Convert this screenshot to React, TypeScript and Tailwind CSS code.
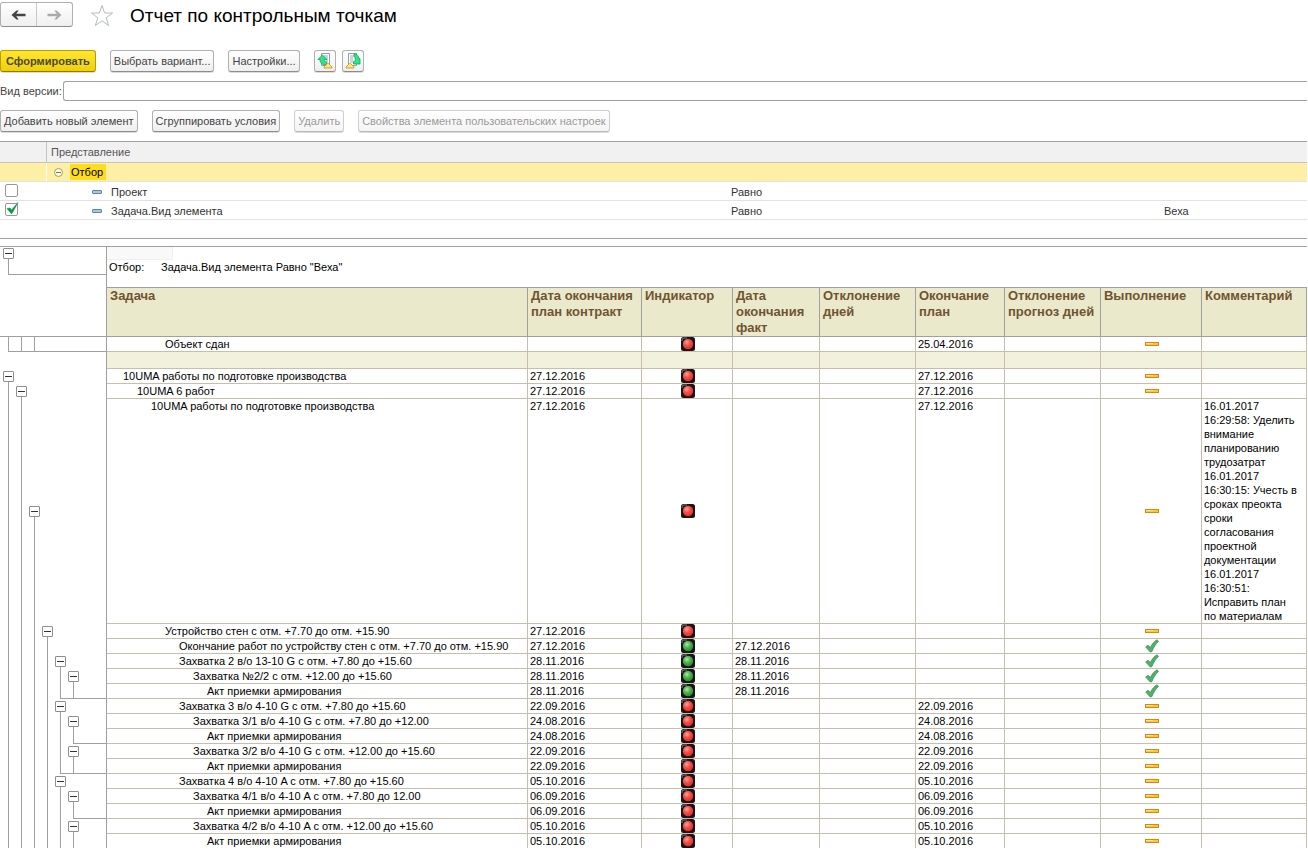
import { useState } from "react";
import type { ReactNode } from "react";

type Guide = "" | "box" | "line" | "corner";
type Status = "red" | "green";

interface ReportRow {
  task: string;
  level: number;
  guides: Guide[];
  status: Status;
  contract?: string;
  fact?: string;
  plan?: string;
  done?: boolean;
  comment?: string;
}

const headings = [
  "Задача",
  "Дата окончания план контракт",
  "Индикатор",
  "Дата окончания факт",
  "Отклонение дней",
  "Окончание план",
  "Отклонение прогноз дней",
  "Выполнение",
  "Комментарий"
];

const firstRow: ReportRow = {
  task: "Объект сдан",
  level: 4,
  guides: ["corner", "line", "line"],
  status: "red",
  plan: "25.04.2016"
};

const comment =
  "16.01.2017\n16:29:58: Уделить внимание планированию трудозатрат\n16.01.2017\n16:30:15: Учесть в сроках преокта сроки согласования проектной документации\n16.01.2017\n16:30:51:\nИсправить план по материалам";

const rows: ReportRow[] = [
  { task: "10UMA работы по подготовке производства", level: 1, guides: ["box"], status: "red", contract: "27.12.2016", plan: "27.12.2016" },
  { task: "10UMA 6 работ", level: 2, guides: ["line", "box"], status: "red", contract: "27.12.2016", plan: "27.12.2016" },
  { task: "10UMA работы по подготовке производства", level: 3, guides: ["line", "line", "box"], status: "red", contract: "27.12.2016", plan: "27.12.2016", comment },
  { task: "Устройство стен с отм. +7.70 до отм. +15.90", level: 4, guides: ["line", "line", "line", "box"], status: "red", contract: "27.12.2016" },
  { task: "Окончание работ по устройству стен с отм. +7.70 до отм. +15.90", level: 5, guides: ["line", "line", "line", "line"], status: "green", contract: "27.12.2016", fact: "27.12.2016", done: true },
  { task: "Захватка 2 в/о 13-10 G с отм. +7.80 до +15.60", level: 5, guides: ["line", "line", "line", "line", "box"], status: "green", contract: "28.11.2016", fact: "28.11.2016", done: true },
  { task: "Захватка №2/2 с отм. +12.00 до +15.60", level: 6, guides: ["line", "line", "line", "line", "line", "box"], status: "green", contract: "28.11.2016", fact: "28.11.2016", done: true },
  { task: "Акт приемки армирования", level: 7, guides: ["line", "line", "line", "line", "corner", "line"], status: "green", contract: "28.11.2016", fact: "28.11.2016", done: true },
  { task: "Захватка 3 в/о 4-10 G с отм. +7.80 до +15.60", level: 5, guides: ["line", "line", "line", "line", "box"], status: "red", contract: "22.09.2016", plan: "22.09.2016" },
  { task: "Захватка 3/1 в/о 4-10 G с отм. +7.80 до +12.00", level: 6, guides: ["line", "line", "line", "line", "line", "box"], status: "red", contract: "24.08.2016", plan: "24.08.2016" },
  { task: "Акт приемки армирования", level: 7, guides: ["line", "line", "line", "line", "line", "corner"], status: "red", contract: "24.08.2016", plan: "24.08.2016" },
  { task: "Захватка 3/2 в/о 4-10 G с отм. +12.00 до +15.60", level: 6, guides: ["line", "line", "line", "line", "line", "box"], status: "red", contract: "22.09.2016", plan: "22.09.2016" },
  { task: "Акт приемки армирования", level: 7, guides: ["line", "line", "line", "line", "corner", "line"], status: "red", contract: "22.09.2016", plan: "22.09.2016" },
  { task: "Захватка 4 в/о 4-10 A с отм. +7.80 до +15.60", level: 5, guides: ["line", "line", "line", "line", "box"], status: "red", contract: "05.10.2016", plan: "05.10.2016" },
  { task: "Захватка 4/1 в/о 4-10 A с отм. +7.80 до 12.00", level: 6, guides: ["line", "line", "line", "line", "line", "box"], status: "red", contract: "06.09.2016", plan: "06.09.2016" },
  { task: "Акт приемки армирования", level: 7, guides: ["line", "line", "line", "line", "line", "corner"], status: "red", contract: "06.09.2016", plan: "06.09.2016" },
  { task: "Захватка 4/2 в/о 4-10 A с отм. +12.00 до +15.60", level: 6, guides: ["line", "line", "line", "line", "line", "box"], status: "red", contract: "05.10.2016", plan: "05.10.2016" },
  { task: "Акт приемки армирования", level: 7, guides: ["line", "line", "line", "line", "line", "line"], status: "red", contract: "05.10.2016", plan: "05.10.2016" }
];

function ToolButton({
  children,
  disabled = false,
  label,
  primary = false
}: {
  children: ReactNode;
  disabled?: boolean;
  label?: string;
  primary?: boolean;
}) {
  const tone = primary
    ? "border-[#b59f00] border-b-[#8f7d00] bg-linear-to-b from-[#ffe62e] to-[#f0d000] font-bold text-[#4a4a32]"
    : disabled
      ? "border-[#cfcfcf] border-b-[#b8b8b8] bg-linear-to-b from-white to-[#f4f4f4] text-[#999]"
      : "border-[#b0b0b0] border-b-[#8c8c8c] bg-linear-to-b from-white to-[#efefef] text-[#444]";
  const padding = primary ? "px-[5px]" : label ? "px-[2px]" : "px-[3px]";

  return (
    <button
      aria-label={label}
      className={`flex h-[22px] items-center justify-center rounded-[3px] border whitespace-nowrap shadow-[0_1px_0_#dcdcdc] ${padding} ${tone}`}
      disabled={disabled}
      type="button"
    >
      {children}
    </button>
  );
}

function NavArrow({ back = false }: { back?: boolean }) {
  return (
    <svg className={back ? "h-3 w-[15px]" : "h-3 w-[15px] -scale-x-100"} viewBox="0 0 15 12">
      <path
        d="M.5 6 5.500 1.500h2.200L5.200 4.800H14.500v2.400H5.200l2.500 3.300H5.500z"
        fill={back ? "#444" : "#aaa"}
      />
    </svg>
  );
}

function StarIcon() {
  return (
    <svg className="h-[23px] w-6" viewBox="0 0 24 23">
      <path
        d="M12 1.5 14.6 9h8l-6.4 4.8 2.4 7.7-6.6-4.7-6.6 4.7 2.4-7.7L1.400 9h8z"
        fill="#fff"
        stroke="#b4b9c0"
      />
    </svg>
  );
}

function LoadSettingsIcon() {
  return (
    <svg className="h-4 w-4 shrink-0" viewBox="0 0 16 16">
      <path d="M4.500.5h8v12h-8z" fill="#fff" stroke="#8d9db3" />
      <path d="M7 3h4M8 5h3M9 7h2M9 9h2" stroke="#9aa9bd" />
      <path
        d="M5.500 2 .8 6.500H3c0 3.500 2 5.500 6.500 5.500V8.800C7.800 8.800 7.200 8 7.400 6.500H10z"
        fill="#2fe38a"
        stroke="#14a65a"
        strokeWidth=".8"
      />
      <path d="M10.500 10.500h1l3.500 3.500v1H7v-1z" fill="#ffe870" stroke="#c99a2c" strokeWidth=".9" />
    </svg>
  );
}

function SaveSettingsIcon() {
  return (
    <svg className="h-4 w-4 shrink-0" viewBox="0 0 16 16">
      <path d="M3.500.5h8v12h-8z" fill="#fff" stroke="#8d9db3" />
      <path d="M5 3h4M5 5h3M5 7h3M5 9h4" stroke="#9aa9bd" />
      <path
        d="M9 1c3 0 4.500 1.500 4.800 4.500H15V11H8.500V9l1.700-1.700C10.500 5 10 4 9 3.500z"
        fill="#2fe38a"
        stroke="#14a65a"
        strokeWidth=".8"
      />
      <path d="M4.500 10.500h1L9 14v1H1v-1z" fill="#ffe870" stroke="#c99a2c" strokeWidth=".9" />
    </svg>
  );
}

function DashIcon() {
  return (
    <svg className="h-1 w-2.5" viewBox="0 0 10 4">
      <rect fill="#a5c8dd" height="3" rx=".5" stroke="#5f87a3" width="9" x=".5" y=".5" />
    </svg>
  );
}

function Indicator({ status }: { status: Status }) {
  const red = status === "red";

  return (
    <svg aria-label={red ? "Просрочено" : "В срок"} className="block h-3.5 w-3.5" role="img" viewBox="0 0 14 14">
      <defs>
        <radialGradient cx=".4" cy=".35" id={`lamp-${status}`} r=".6">
          <stop offset="0" stopColor={red ? "#ffb0a8" : "#b4e8a8"} />
          <stop offset=".5" stopColor={red ? "#f8504a" : "#55b554"} />
          <stop offset="1" stopColor={red ? "#e8302c" : "#2f8f35"} />
        </radialGradient>
      </defs>
      <rect fill="#161616" height="14" rx="2.500" width="14" />
      <path d="M1 4V3a2 2 0 0 1 2-2h3" fill="none" stroke="#777" />
      <circle cx="7" cy="7" fill={`url(#lamp-${status})`} r="5.200" />
    </svg>
  );
}

function ProgressMark({ done = false }: { done?: boolean }) {
  if (done) {
    return (
      <svg aria-label="Выполнено" className="block h-3.5 w-3.5" role="img" viewBox="0 0 14 14">
        <path
          d="M.7 8 3 6.300l2.300 2.200C7 5 9.500 2.300 12 .8l1.500 1.400C10.500 5.300 8.500 8.500 6.800 12.700L5.300 13z"
          fill="#4cb368"
          stroke="#3b8f55"
          strokeWidth=".8"
        />
      </svg>
    );
  }

  return (
    <svg aria-label="Не выполнено" className="block h-1 w-3.5" role="img" viewBox="0 0 14 4">
      <rect fill="#ffc72c" height="3" stroke="#dd8512" width="13" x=".5" y=".5" />
      <path d="M1 1.500h7" stroke="#ffe39a" />
    </svg>
  );
}

function GuideSlot({ guide }: { guide: Guide }) {
  if (guide === "box") {
    return (
      <div className="flex w-[13px] flex-col items-center">
        <div className="flex-1" />
        <button
          aria-label="Свернуть группу"
          className="flex h-[11px] w-[11px] shrink-0 items-center justify-center rounded-[1px] border border-[#8f8f8f] bg-white"
          type="button"
        >
          <span className="h-px w-[7px] bg-[#333]" />
        </button>
        <div className="w-px flex-1 bg-[#a0a0a0]" />
      </div>
    );
  }

  return (
    <div className="flex w-[13px] justify-center">
      {guide ? <div className="w-px bg-[#a0a0a0]" /> : null}
    </div>
  );
}

// Outline column to the left of the sheet. A corner closes its group with a line up to the sheet.
function GuideCell({ guides = [] }: { guides?: Guide[] }) {
  const corner = guides.indexOf("corner");

  return (
    <td className="h-px border-r border-[#a0a0a0] p-0">
      <div className="relative flex h-full pl-[2px]">
        {guides.map((guide, index) => (
          <GuideSlot guide={guide} key={index} />
        ))}
        {corner >= 0 ? (
          <div
            className="absolute right-0 bottom-0 h-px bg-[#a0a0a0]"
            style={{ left: 8 + corner * 13 }}
          />
        ) : null}
      </div>
    </td>
  );
}

function DataRow({ last = false, row }: { last?: boolean; row: ReportRow }) {
  const cell = `border-r border-[#c8beae] p-0 pl-[2px] align-top ${last ? "h-[14px]" : "h-[15px] border-b"}`;
  const iconCell = `border-r border-[#c8beae] p-0 pl-[2px] align-middle ${last ? "" : "border-b"}`;

  return (
    <tr>
      <GuideCell guides={row.guides} />
      <td className={cell}>
        <div className="whitespace-nowrap" style={{ paddingLeft: row.level * 14 }}>
          {row.task}
        </div>
      </td>
      <td className={cell}>{row.contract}</td>
      <td className={iconCell}>
        <div className="flex justify-center">
          <Indicator status={row.status} />
        </div>
      </td>
      <td className={cell}>{row.fact}</td>
      <td className={cell} />
      <td className={cell}>{row.plan}</td>
      <td className={cell} />
      <td className={iconCell}>
        <div className="flex justify-center">
          <ProgressMark done={row.done} />
        </div>
      </td>
      <td className={cell}>
        <div className="pr-[6px] whitespace-pre-line">{row.comment}</div>
      </td>
    </tr>
  );
}

function FilterRow({
  checked,
  name,
  onChange,
  value
}: {
  checked: boolean;
  name: string;
  onChange: (checked: boolean) => void;
  value?: string;
}) {
  return (
    <tr className="h-[19px]">
      <td className="border-b border-[#e2e2e2] p-0 pb-[2px] pl-[5px]">
        <div className="relative h-[13px] w-[13px]">
          <input
            aria-label={name}
            checked={checked}
            className="block h-[13px] w-[13px] appearance-none rounded-[2px] border border-[#999] bg-white"
            onChange={(event) => onChange(event.currentTarget.checked)}
            type="checkbox"
          />
          {checked ? (
            <svg className="pointer-events-none absolute -top-px left-px h-[13px] w-[13px]" viewBox="0 0 13 13">
              <path d="m1 6.500 3-.5 1.500 2L12 .5 6 11.500H5z" fill="#0a9b4a" stroke="#0a9b4a" strokeWidth=".6" />
            </svg>
          ) : null}
        </div>
      </td>
      <td className="border-b border-[#e2e2e2] p-0 pt-[2px]">
        <div className="flex items-center gap-[9px] pl-[45px]">
          <DashIcon />
          {name}
        </div>
      </td>
      <td className="border-b border-[#e2e2e2] p-0 pt-[2px] pl-1">Равно</td>
      <td className="border-b border-[#e2e2e2] p-0 pt-[2px] pl-1">{value}</td>
    </tr>
  );
}

export default function App() {
  const [version, setVersion] = useState("");
  const [project, setProject] = useState(false);
  const [element, setElement] = useState(true);

  return (
    <main className="bg-white pr-px font-['Liberation_Sans',Arial,sans-serif] text-[11px] leading-[14px] text-black">
      <header className="flex h-[50px] items-start pt-[2px]">
        <div className="flex h-[25px] w-[73px] rounded-[3px] border border-[#b0b0b0] border-b-[#8c8c8c] bg-linear-to-b from-white to-[#efefef]">
          <button aria-label="Назад" className="flex flex-1 items-center justify-center border-r border-[#c8c8c8]" type="button">
            <NavArrow back />
          </button>
          <button aria-label="Вперед" className="flex flex-1 items-center justify-center" type="button">
            <NavArrow />
          </button>
        </div>
        <button aria-label="В избранное" className="ml-[17px] pt-[2px]" type="button">
          <StarIcon />
        </button>
        <h1 className="ml-4 text-[19px] leading-[28px]">Отчет по контрольным точкам</h1>
      </header>

      <div className="flex gap-[14px]">
        <ToolButton primary>Сформировать</ToolButton>
        <ToolButton>Выбрать вариант...</ToolButton>
        <ToolButton>Настройки...</ToolButton>
        <div className="flex gap-[6px]">
          <ToolButton label="Загрузить настройки">
            <LoadSettingsIcon />
          </ToolButton>
          <ToolButton label="Сохранить настройки">
            <SaveSettingsIcon />
          </ToolButton>
        </div>
      </div>

      <div className="flex items-center gap-px py-[9px] text-[#444]">
        <label className="whitespace-nowrap" htmlFor="version">
          Вид версии:
        </label>
        <input
          className="h-5 min-w-0 flex-1 rounded-l-[3px] border border-r-0 border-[#a0a0a0] bg-white px-1 outline-none"
          id="version"
          onChange={(event) => setVersion(event.currentTarget.value)}
          type="text"
          value={version}
        />
      </div>

      <div className="flex gap-[14px]">
        <ToolButton>Добавить новый элемент</ToolButton>
        <ToolButton>Сгруппировать условия</ToolButton>
        <ToolButton disabled>Удалить</ToolButton>
        <ToolButton disabled>Свойства элемента пользовательских настроек</ToolButton>
      </div>

      <section className="mt-[9px] border-y border-[#a0a0a0] pb-[18px] text-[#333]">
        <table className="w-full table-fixed border-separate border-spacing-0">
          <colgroup>
            <col className="w-[47px]" />
            <col />
            <col className="w-[433px]" />
            <col className="w-[147px]" />
          </colgroup>
          <thead>
            <tr className="h-[21px] bg-[#f1f1f1] text-left text-[#555]">
              <th aria-label="Использование" className="border-r border-b border-[#c4c4c4] p-0" />
              <th className="border-b border-[#c4c4c4] p-0 pl-1 font-normal" colSpan={3}>
                Представление
              </th>
            </tr>
          </thead>
          <tbody>
            <tr className="h-[19px]">
              <td className="border-r border-b border-r-white border-b-[#e2e2e2] bg-[#fdf0a4] p-0" />
              <td className="border-b border-[#e2e2e2] bg-[#fdf0a4] p-0" colSpan={3}>
                <div className="flex items-center pl-[7px] text-black">
                  <button
                    aria-label="Свернуть отбор"
                    className="flex h-[9px] w-[9px] items-center justify-center rounded-full border border-[#a59c68] bg-[#fffbe0]"
                    type="button"
                  >
                    <span className="h-px w-[5px] bg-[#7d7650]" />
                  </button>
                  <span className="ml-[7px] bg-[#ffdc1c] py-px pr-[3px] pl-px">Отбор</span>
                </div>
              </td>
            </tr>
            <FilterRow checked={project} name="Проект" onChange={setProject} />
            <FilterRow checked={element} name="Задача.Вид элемента" onChange={setElement} value="Веха" />
          </tbody>
        </table>
      </section>

      <section className="mt-[7px] border-t border-[#a0a0a0]">
        <table className="w-full table-fixed border-separate border-spacing-0">
          <colgroup>
            <col className="w-[107px]" />
            <col />
            <col className="w-[114px]" />
            <col className="w-[91px]" />
            <col className="w-[87px]" />
            <col className="w-[96px]" />
            <col className="w-[89px]" />
            <col className="w-[96px]" />
            <col className="w-[101px]" />
            <col className="w-[105px]" />
          </colgroup>
          <thead className="text-left">
            <tr>
              <GuideCell guides={["box"]} />
              <td className="p-0" colSpan={9}>
                <div className="h-[13px] w-[66px] border-r border-b border-[#f0f0f0] bg-[#f9f9f9]" />
              </td>
            </tr>
            <tr className="h-[15px]">
              <GuideCell guides={["corner"]} />
              <td className="p-0 pl-[2px] align-top" colSpan={9}>
                <div className="flex">
                  <span className="w-[52px]">Отбор:</span>
                  <span>Задача.Вид элемента Равно "Веха"</span>
                </div>
              </td>
            </tr>
            <tr className="h-[13px]">
              <td className="border-r border-[#a0a0a0] p-0" />
              <td className="border-b border-[#a0a0a0] p-0" colSpan={9} />
            </tr>
            <tr className="h-[49px]">
              <td className="border-r border-b border-[#a0a0a0] p-0" />
              {headings.map((heading) => (
                <th
                  className="border-r border-b border-[#a0a0a0] bg-[#ebe9cb] p-0 pl-[3px] align-top text-[13px] leading-4 font-bold text-[#705432]"
                  key={heading}
                >
                  {heading}
                </th>
              ))}
            </tr>
          </thead>
          <tbody>
            <DataRow row={firstRow} />
            <tr className="h-[17px]">
              <td className="border-r border-[#a0a0a0] p-0" />
              {headings.map((heading) => (
                <td className="border-r border-b border-[#c8beae] bg-[#f2f1da] p-0" key={heading} />
              ))}
            </tr>
            {rows.map((row, index) => (
              <DataRow key={index} last={index === rows.length - 1} row={row} />
            ))}
          </tbody>
        </table>
      </section>
    </main>
  );
}
